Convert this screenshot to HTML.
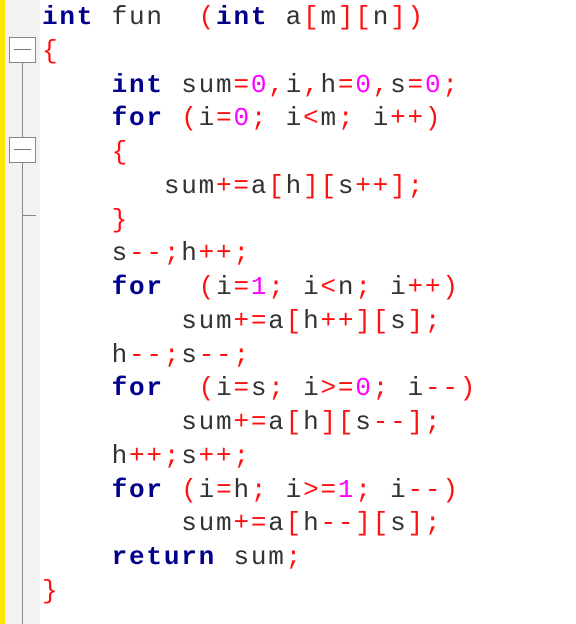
<!DOCTYPE html>
<html><head><style>
body{margin:0;width:576px;height:624px;background:#fff;position:relative;overflow:hidden;font-family:"Liberation Mono","Courier New",monospace;}
.y{position:absolute;left:0;top:0;width:5px;height:624px;background:#ffe800;}
.g{position:absolute;left:5px;top:0;width:35px;height:624px;background:#f2f2f2;}
.l{position:absolute;background:#888;}
.b{position:absolute;width:25px;height:24px;border:1px solid #888;background:#fff;}
.b:after{content:"";position:absolute;left:4px;right:4px;top:11px;height:1px;background:#777;}
pre{margin:0;position:absolute;left:42px;top:1px;font-size:26px;letter-spacing:1.8px;line-height:33.75px;color:#333;font-family:inherit;}
k{color:#00008b;font-weight:bold}
o{color:#ff1010}
n{color:#ff00ff}
</style></head><body>
<div class="y"></div><div class="g"></div>
<div class="l" style="left:22px;top:63px;width:1px;height:561px"></div>
<div class="b" style="left:9px;top:37px"></div>
<div class="b" style="left:9px;top:137px"></div>
<div class="l" style="left:22px;top:215px;width:14px;height:1px"></div>
<pre><k>int</k> fun  <o>(</o><k>int</k> a<o>[</o>m<o>][</o>n<o>])</o>
<o>{</o>
    <k>int</k> sum<o>=</o><n>0</n><o>,</o>i<o>,</o>h<o>=</o><n>0</n><o>,</o>s<o>=</o><n>0</n><o>;</o>
    <k>for</k> <o>(</o>i<o>=</o><n>0</n><o>;</o> i<o>&lt;</o>m<o>;</o> i<o>++)</o>
    <o>{</o>
       sum<o>+=</o>a<o>[</o>h<o>][</o>s<o>++];</o>
    <o>}</o>
    s<o>--;</o>h<o>++;</o>
    <k>for</k>  <o>(</o>i<o>=</o><n>1</n><o>;</o> i<o>&lt;</o>n<o>;</o> i<o>++)</o>
        sum<o>+=</o>a<o>[</o>h<o>++][</o>s<o>];</o>
    h<o>--;</o>s<o>--;</o>
    <k>for</k>  <o>(</o>i<o>=</o>s<o>;</o> i<o>&gt;=</o><n>0</n><o>;</o> i<o>--)</o>
        sum<o>+=</o>a<o>[</o>h<o>][</o>s<o>--];</o>
    h<o>++;</o>s<o>++;</o>
    <k>for</k> <o>(</o>i<o>=</o>h<o>;</o> i<o>&gt;=</o><n>1</n><o>;</o> i<o>--)</o>
        sum<o>+=</o>a<o>[</o>h<o>--][</o>s<o>];</o>
    <k>return</k> sum<o>;</o>
<o>}</o></pre>
</body></html>
